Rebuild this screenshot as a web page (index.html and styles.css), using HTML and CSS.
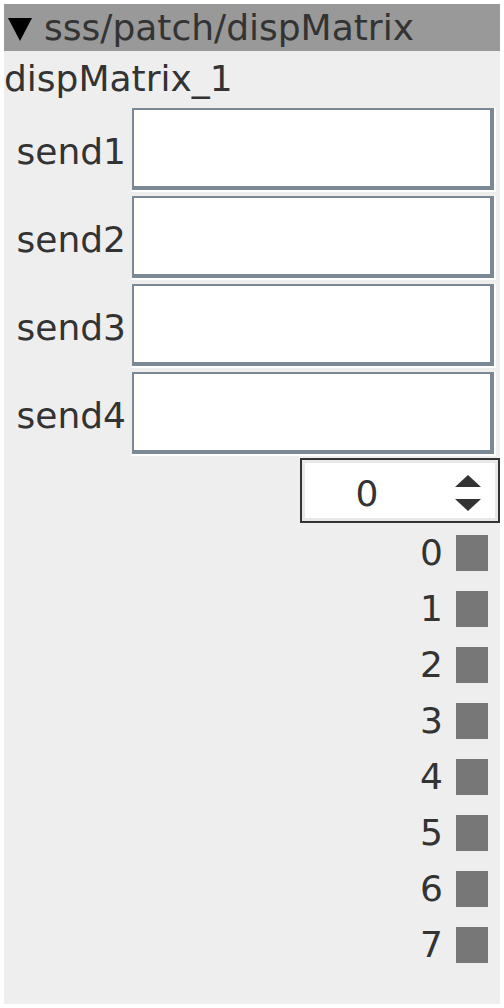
FILE: index.html
```html
<!DOCTYPE html>
<html lang="en">
<head>
    <meta charset="UTF-8">
    <title>dispMatrix</title>
    <link rel="stylesheet" href="styles.css">
</head>
<body>
    <div class="panel">
        <div class="header">
            <svg class="toggle" width="24" height="24" viewBox="0 0 24 24"><polygon points="0,1 24,1 12,24" fill="#000"/></svg>
            <span>sss/patch/dispMatrix</span>
        </div>
        <div class="title">dispMatrix_1</div>

        <div class="field">
            <label>send1</label>
            <div class="box"><div class="input"></div></div>
        </div>
        <div class="field">
            <label>send2</label>
            <div class="box"><div class="input"></div></div>
        </div>
        <div class="field">
            <label>send3</label>
            <div class="box"><div class="input"></div></div>
        </div>
        <div class="field">
            <label>send4</label>
            <div class="box"><div class="input"></div></div>
        </div>

        <div class="spin-row">
            <div class="spinner">
                <div class="spin-inner">
                    <span class="spin-value">0</span>
                    <svg class="arrows" width="26" height="38" viewBox="0 0 26 38">
                        <polygon points="13,0 26,12 0,12" fill="#333"/>
                        <polygon points="0,24 26,24 13,36" fill="#333"/>
                    </svg>
                </div>
            </div>
        </div>

        <div class="leds">
            <div class="led"><span>0</span><div class="square"></div></div>
            <div class="led"><span>1</span><div class="square"></div></div>
            <div class="led"><span>2</span><div class="square"></div></div>
            <div class="led"><span>3</span><div class="square"></div></div>
            <div class="led"><span>4</span><div class="square"></div></div>
            <div class="led"><span>5</span><div class="square"></div></div>
            <div class="led"><span>6</span><div class="square"></div></div>
            <div class="led"><span>7</span><div class="square"></div></div>
        </div>
    </div>
</body>
</html>
```

FILE: styles.css
```css
* {
    margin: 0;
    padding: 0;
    box-sizing: border-box;
}

body {
    margin: 4px;
    background: #fff;
    font-family: "DejaVu Sans", sans-serif;
    font-size: 36px;
    color: #333;
}

.panel {
    width: 496px;
    height: 1000px;
    background: #eee;
}

.header {
    height: 47px;
    background: #999;
    display: flex;
    align-items: center;
    gap: 12px;
    padding-left: 4px;
    line-height: 1;
}

.toggle {
    margin-top: 2px;
}

.title {
    height: 55px;
    display: flex;
    align-items: center;
    line-height: 1;
}

.field {
    display: flex;
    height: 86px;
    margin-bottom: 2px;
}

.field label {
    width: 126px;
    padding-right: 4px;
    padding-top: 4px;
    display: flex;
    align-items: center;
    justify-content: flex-end;
}

.box {
    width: 366px;
    border: 2px solid;
    border-color: #eee #fff #fff #eee;
}

.input {
    height: 100%;
    background: #fff;
    border-style: solid;
    border-color: #7a8896;
    border-width: 2px 4px 4px 2px;
}

.spin-row {
    display: flex;
    justify-content: flex-end;
    margin-top: 2px;
}

.spinner {
    width: 200px;
    height: 65px;
    border: 2px solid #333;
}

.spin-inner {
    height: 100%;
    background: #fff;
    border: 3px solid #e8e8e8;
    display: flex;
    align-items: center;
    padding-right: 14px;
    padding-top: 7px;
}

.spin-value {
    flex: 1;
    text-align: center;
    padding-right: 26px;
    line-height: 1;
}

.leds {
    padding-top: 2px;
}

.led {
    height: 56px;
    display: flex;
    align-items: center;
    justify-content: flex-end;
    gap: 13px;
    padding-right: 12px;
    line-height: 1;
}

.square {
    width: 32px;
    height: 36px;
    background: #777;
}
```
